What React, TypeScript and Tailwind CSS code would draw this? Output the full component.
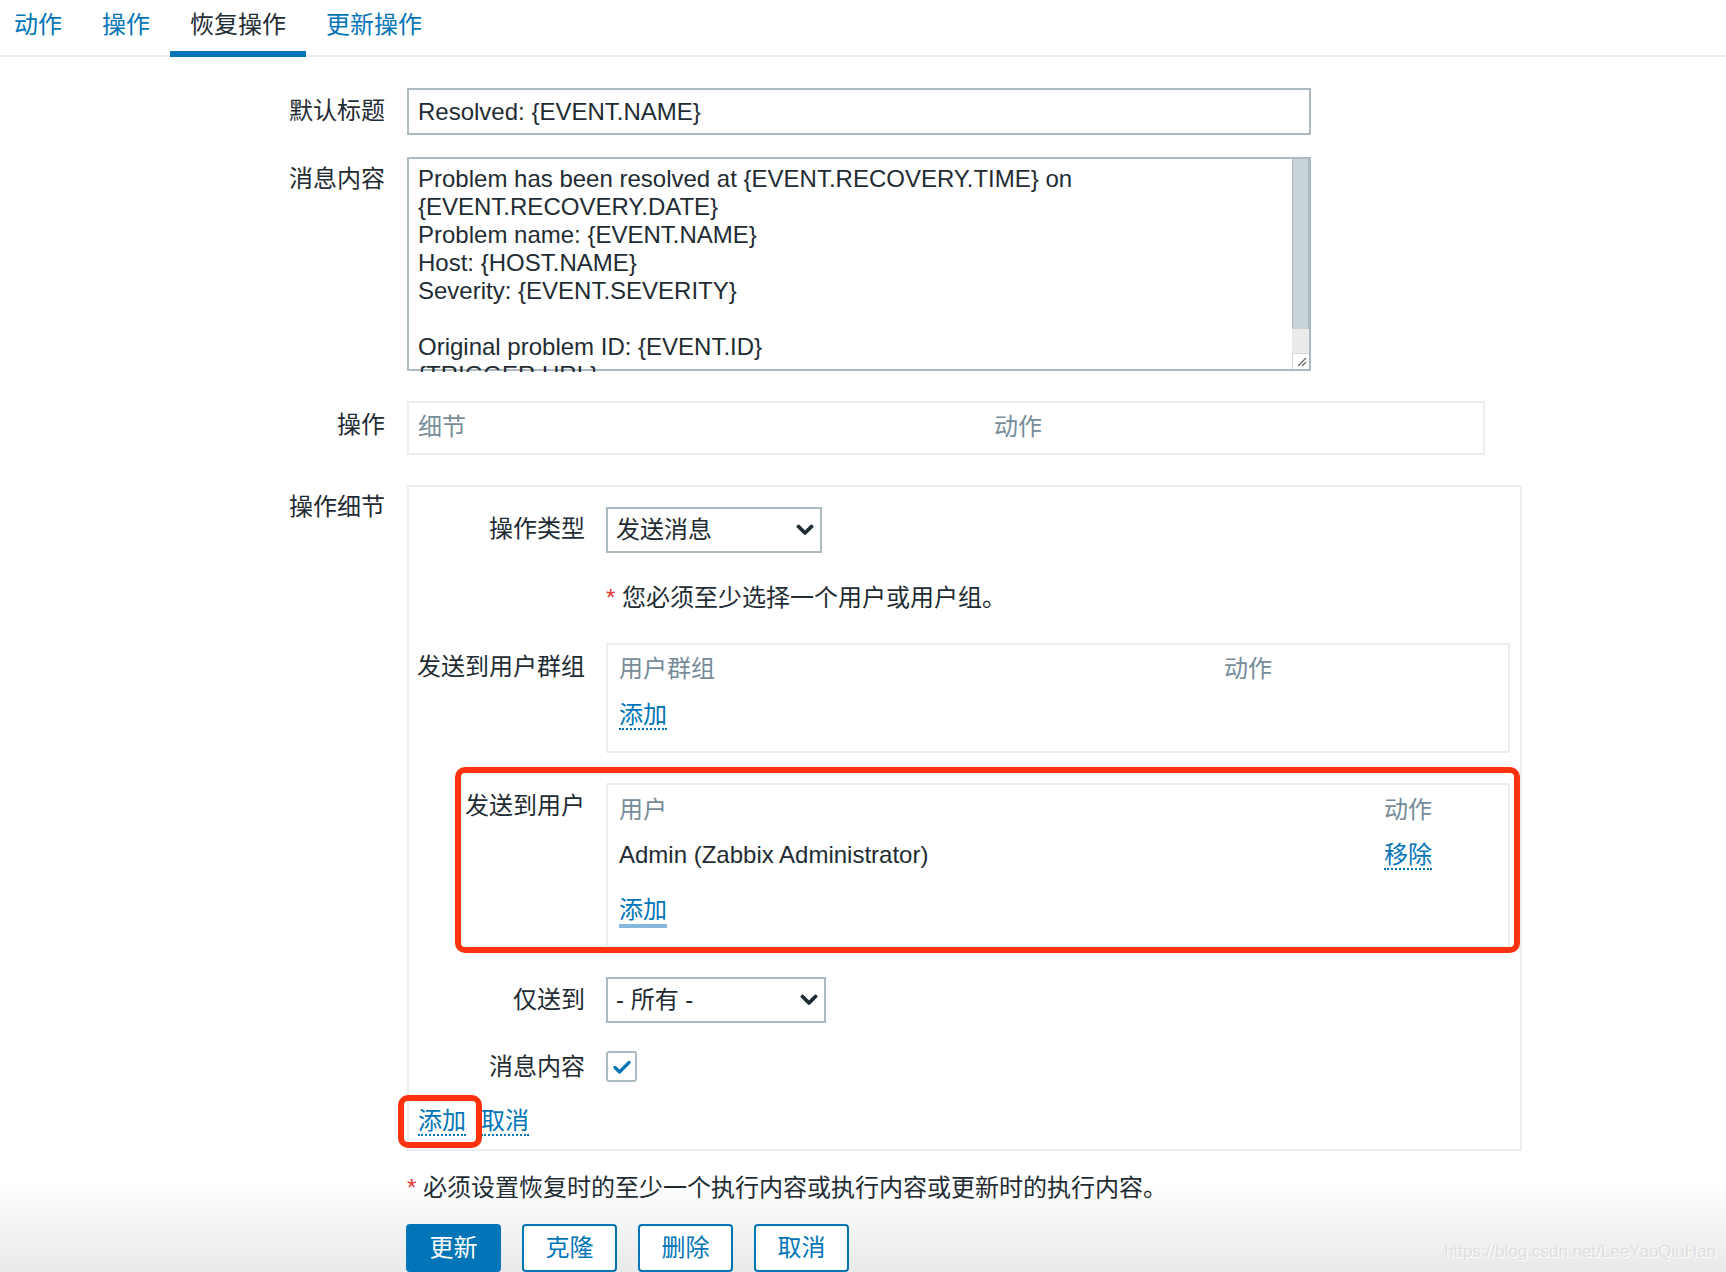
import React from "react";

const tabs = [
  { label: "动作" },
  { label: "操作" },
  { label: "恢复操作", active: true },
  { label: "更新操作" },
];

const messageLines = [
  "Problem has been resolved at {EVENT.RECOVERY.TIME} on",
  "{EVENT.RECOVERY.DATE}",
  "Problem name: {EVENT.NAME}",
  "Host: {HOST.NAME}",
  "Severity: {EVENT.SEVERITY}",
  "",
  "Original problem ID: {EVENT.ID}",
  "{TRIGGER.URL}",
];

const Chevron = () => (
  <svg width="18" height="12" viewBox="0 0 18 12" fill="none">
    <path d="M2.5 2.5 L9 9 L15.5 2.5" stroke="#1f2c33" strokeWidth="3.8" strokeLinecap="round" strokeLinejoin="round" />
  </svg>
);

const Select = ({ value, width }: { value: string; width: string }) => (
  <div className={`flex h-[46px] ${width} items-center justify-between border-2 border-[#acbbc2] bg-white pl-[8px] pr-[6px] leading-[28px]`}>
    <span>{value}</span>
    <Chevron />
  </div>
);

const Row = ({ label, labelClass, className, children }: { label: string; labelClass: string; className: string; children: React.ReactNode }) => (
  <div className={`flex gap-[22px] ${className}`}>
    <div className={`w-[385px] shrink-0 text-right leading-[28px] ${labelClass}`}>{label}</div>
    {children}
  </div>
);

const InnerRow = ({ label, labelClass, className, children }: { label: string; labelClass: string; className: string; children: React.ReactNode }) => (
  <div className={`relative flex gap-[21px] ${className}`}>
    <div className={`w-[176px] shrink-0 text-right leading-[28px] whitespace-nowrap ${labelClass}`}>{label}</div>
    {children}
  </div>
);

const DottedLink = ({ children }: { children: React.ReactNode }) => (
  <span className="inline-block border-b-2 border-dotted border-[#0275b8] leading-[27px] text-[#0275b8]">{children}</span>
);

export default function App() {
  return (
    <div className="relative min-h-[1272px] w-[1726px] overflow-hidden bg-[linear-gradient(to_bottom,#ffffff_1180px,#e9e9e9_1272px)] font-[family-name:'Liberation_Sans','Noto_Sans_CJK_SC',sans-serif] text-[24px] text-[#1f2c33]">
      {/* tabs */}
      <div className="flex h-[57px] border-b-2 border-[#ebeef0]">
        <div className="-ml-[6px] flex">
          {tabs.map((t) => (
            <div
              key={t.label}
              className={`h-[57px] border-b-[6px] px-[20px] pt-[11px] leading-[28px] ${
                t.active ? "border-[#0275b8] text-[#1f2c33]" : "border-transparent text-[#0275b8]"
              }`}
            >
              {t.label}
            </div>
          ))}
        </div>
      </div>

      {/* default subject */}
      <Row label="默认标题" labelClass="pt-[9px]" className="mt-[31px]">
        <div className="h-[47px] w-[904px] border-2 border-[#acbbc2] px-[9px] leading-[43px]">Resolved: {"{EVENT.NAME}"}</div>
      </Row>

      {/* message */}
      <Row label="消息内容" labelClass="pt-[8px]" className="mt-[22px]">
        <div className="flex h-[214px] w-[904px] border-2 border-[#acbbc2]">
          <div className="h-[213px] flex-1 overflow-hidden pl-[9px] pt-[6px] leading-[28px] whitespace-pre">
            {messageLines.map((l, i) => (
              <div key={i} className="h-[28px]">{l}</div>
            ))}
          </div>
          <div className="flex w-[17px] flex-col">
            <div className="h-[170px] border-x border-[#acbbc2] bg-[#c9d4da]" />
            <div className="h-[24px] bg-[#ebebeb]" />
            <div className="flex flex-1 items-end justify-end border-l border-t border-[#d6d6d6] bg-white p-[2px]">
              <svg width="10" height="10" viewBox="0 0 10 10">
                <path d="M1 9 L9 1 M5 9 L9 5" stroke="#666" strokeWidth="1.2" />
              </svg>
            </div>
          </div>
        </div>
      </Row>

      {/* operations */}
      <Row label="操作" labelClass="pt-[10px]" className="mt-[30px]">
        <div className="grid h-[54px] w-[1078px] grid-cols-[576px_1fr] border-2 border-[#ebeef0] pl-[9px] pt-[10px] leading-[28px] text-[#768d99]">
          <span>细节</span>
          <span>动作</span>
        </div>
      </Row>

      {/* operation details */}
      <Row label="操作细节" labelClass="pt-[8px]" className="mt-[30px]">
        <div className="relative w-[1115px] border-2 border-[#ebeef0] pb-[13px] pt-[20px]">
          <InnerRow label="操作类型" labelClass="pt-[8px]" className="">
            <Select value="发送消息" width="w-[216px]" />
          </InnerRow>

          <InnerRow label="" labelClass="" className="mt-[31px]">
            <div className="leading-[28px]">
              <span className="text-[#e33734]">*</span> 您必须至少选择一个用户或用户组。
            </div>
          </InnerRow>

          <InnerRow label="发送到用户群组" labelClass="pt-[10px]" className="mt-[31px]">
            <div className="h-[110px] w-[904px] border-2 border-[#ebeef0] pl-[11px] pt-[10px] leading-[28px]">
              <div className="grid grid-cols-[605px_1fr] text-[#768d99]">
                <span>用户群组</span>
                <span>动作</span>
              </div>
              <div className="mt-[18px]">
                <DottedLink>添加</DottedLink>
              </div>
            </div>
          </InnerRow>

          <InnerRow label="发送到用户" labelClass="pt-[9px]" className="mt-[30px]">
            <div className="h-[165px] w-[904px] border-2 border-[#ebeef0] pl-[11px] pt-[11px] leading-[28px]">
              <div className="grid grid-cols-[765px_1fr] text-[#768d99]">
                <span>用户</span>
                <span>动作</span>
              </div>
              <div className="mt-[17px] grid grid-cols-[765px_1fr]">
                <span>Admin (Zabbix Administrator)</span>
                <span>
                  <DottedLink>移除</DottedLink>
                </span>
              </div>
              <div className="mt-[26px]">
                <span className="inline-block border-b-[4px] border-[#86b7dc] leading-[28px] text-[#0275b8]">添加</span>
              </div>
            </div>
            {/* annotation */}
            <div className="pointer-events-none absolute -bottom-[5px] -top-[16px] left-[46px] right-0 rounded-[10px] border-[6px] border-[#ff3210]" />
          </InnerRow>

          <InnerRow label="仅送到" labelClass="pt-[9px]" className="mt-[29px]">
            <Select value="- 所有 -" width="w-[220px]" />
          </InnerRow>

          <InnerRow label="消息内容" labelClass="pt-[2px]" className="mt-[28px]">
            <div className="flex h-[31px] w-[31px] items-center justify-center rounded-[3px] border-2 border-[#acbbc2] bg-white">
              <svg width="18" height="14" viewBox="0 0 18 14" fill="none">
                <path d="M2 7.5 L6.5 12 L16 2.5" stroke="#0275b8" strokeWidth="3.2" strokeLinecap="round" strokeLinejoin="round" />
              </svg>
            </div>
          </InnerRow>

          <div className="mt-[25px] flex gap-[15px] pl-[9px] leading-[28px]">
            <span className="relative">
              <DottedLink>添加</DottedLink>
              <span className="pointer-events-none absolute -bottom-[12px] -left-[20px] -right-[16px] -top-[12px] rounded-[10px] border-[6px] border-[#ff3210]" />
            </span>
            <DottedLink>取消</DottedLink>
          </div>
        </div>
      </Row>

      {/* note */}
      <Row label="" labelClass="" className="mt-[23px]">
        <div className="leading-[28px]">
          <span className="text-[#e33734]">*</span> 必须设置恢复时的至少一个执行内容或执行内容或更新时的执行内容。
        </div>
      </Row>

      {/* buttons */}
      <Row label="" labelClass="" className="mt-[22px]">
        <div className="-ml-[1px] flex gap-[21px]">
          <button className="h-[48px] w-[95px] rounded-[4px] border-2 border-[#0275b8] bg-[#0275b8] text-white">更新</button>
          <button className="h-[48px] w-[95px] rounded-[4px] border-2 border-[#0275b8] bg-white text-[#0275b8]">克隆</button>
          <button className="h-[48px] w-[95px] rounded-[4px] border-2 border-[#0275b8] bg-white text-[#0275b8]">删除</button>
          <button className="h-[48px] w-[95px] rounded-[4px] border-2 border-[#0275b8] bg-white text-[#0275b8]">取消</button>
        </div>
      </Row>

      <div className="absolute bottom-[8px] right-[10px] text-[17px] text-[#dedede] [text-shadow:1px_1px_0_#ffffff]">
        https://blog.csdn.net/LeeYaoQiuHan
      </div>
    </div>
  );
}
